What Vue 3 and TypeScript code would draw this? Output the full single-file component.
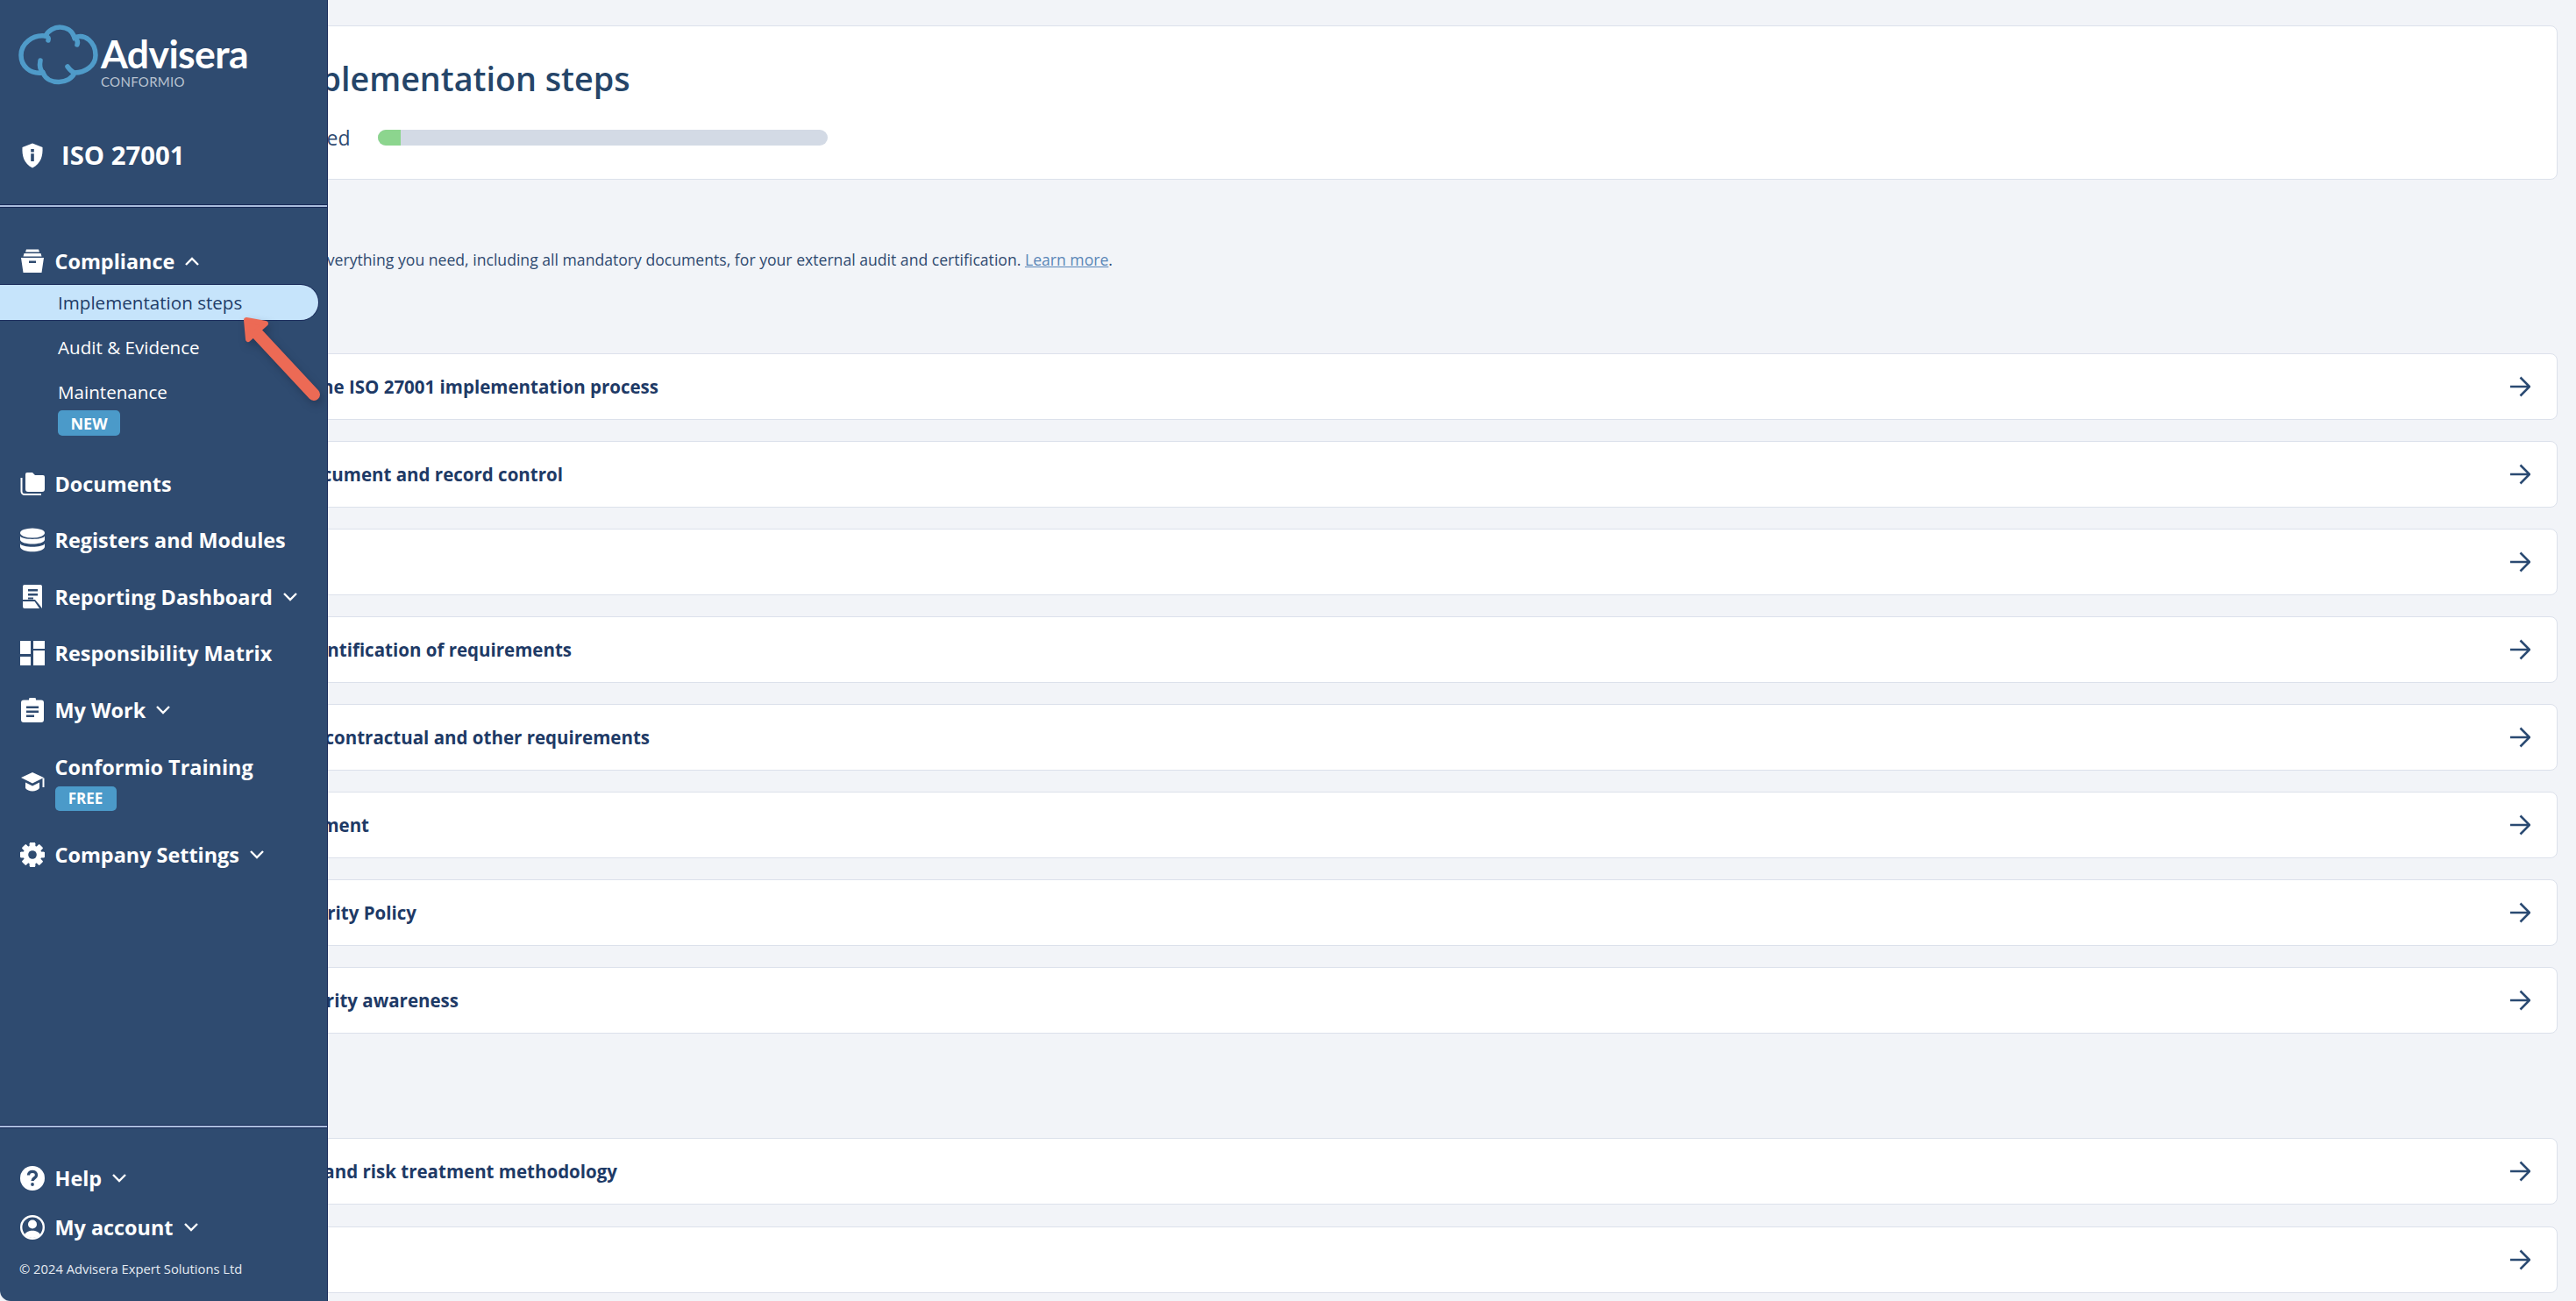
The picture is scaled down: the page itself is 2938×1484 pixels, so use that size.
<script setup lang="ts">
interface Row { text: string; end: number }
const groupA: Row[] = [
  { text: 'Read the ISO 27001 implementation process', end: 750 },
  { text: 'Document and record control', end: 641 },
  { text: 'Plan', end: 372 },
  { text: 'Identification of requirements', end: 651 },
  { text: 'Legal, contractual and other requirements', end: 740 },
  { text: 'Management', end: 420 },
  { text: 'Information Security Policy', end: 474 },
  { text: 'Training and security awareness', end: 522 },
]
const groupB: Row[] = [
  { text: 'Risk assessment and risk treatment methodology', end: 703 },
  { text: 'Register', end: 372 },
]
const START = 300
const labelStyle = (r: Row) => ({ width: `${r.end - START}px` })
const teeth = [0, 45, 90, 135, 180, 225, 270, 315]
</script>

<template>
  <div class="page">
    <main class="main">
      <section class="head-card">
        <h1 class="title"><span>Implementation steps</span></h1>
        <div class="progress-line">
          <span class="progress-label"><span>Completed</span></span>
          <div class="track"><div class="fill"></div></div>
        </div>
      </section>
      <p class="intro">
        <span class="intro-in">Here you have everything you need, including all mandatory documents, for your external audit and certification. <a class="link">Learn more</a>.</span>
      </p>
      <div class="group">
        <div v-for="r in groupA" :key="r.text" class="row">
          <span class="row-label" :style="labelStyle(r)"><span>{{ r.text }}</span></span>
          <svg class="arrow" viewBox="0 0 24 24"><path d="M1 12H22.500M12.500 1.500L23 12L12.500 22.500" /></svg>
        </div>
      </div>
      <div class="group group-b">
        <div v-for="r in groupB" :key="r.text" class="row">
          <span class="row-label" :style="labelStyle(r)"><span>{{ r.text }}</span></span>
          <svg class="arrow" viewBox="0 0 24 24"><path d="M1 12H22.500M12.500 1.500L23 12L12.500 22.500" /></svg>
        </div>
      </div>
    </main>

    <aside class="side">
      <div class="side-top">
        <div class="brand">
          <svg class="cloud" viewBox="0 0 90 68">
            <path d="M30 13 C36 0 58 -1 63 15 C75 10 87 20 87 35 C87 47 75 55 63 55 C58 68 33 70 27 55 C12 57 2 47 2 35 C2 22 15 11 30 13" />
            <path d="M30 13 C33 14 34 16 33 18" />
            <path d="M63 15 C66 17 67 20 66 23" />
            <path d="M55 48 C58 52 60 54 63 55" />
            <path d="M27 55 C23 51 23 46 24 41" />
          </svg>
          <div class="brand-text">
            <div class="brand-name">Advisera</div>
            <div class="brand-sub">CONFORMIO</div>
          </div>
        </div>
        <div class="product">
          <svg class="icon shield" viewBox="0 0 24 28"><path fill-rule="evenodd" d="M12 0 L23.500 4.500 C24 14 22 23 12 28 C2 23 0 14 .5 4.500Z M10.200 6.500h3.600v3.600h-3.600Z M10.200 11.800h3.600v8.800h-3.600Z" /></svg>
          <span>ISO 27001</span>
        </div>
      </div>
      <div class="divider"></div>

      <nav class="nav">
        <div class="item first">
          <svg class="icon" viewBox="0 0 28 28"><path d="M7 0.500h14l1 3H6ZM4.500 5h19l1 3.500H3.500ZM1 10h26l-2.500 17H3.500ZM10 13.500v2.500h8v-2.500Z" fill-rule="evenodd" /></svg>
          <span>Compliance</span>
          <svg class="chev up" viewBox="0 0 16 10"><path d="M1 9L8 2L15 9" /></svg>
        </div>
        <div class="sub active">Implementation steps</div>
        <div class="sub">Audit &amp; Evidence</div>
        <div class="sub sub-m">
          <span>Maintenance</span>
          <span class="badge">NEW</span>
        </div>
        <div class="item">
          <svg class="icon" viewBox="0 0 28 28"><path d="M6 3a2 2 0 0 1 2-2h6l3 3h9a2 2 0 0 1 2 2v14a3 3 0 0 1-3 3H9a3 3 0 0 1-3-3Z" /><path class="thin" d="M1.500 7v15.500a3.500 3.500 0 0 0 3.500 3.500h19" /></svg>
          <span>Documents</span>
        </div>
        <div class="item">
          <svg class="icon" viewBox="0 0 28 28"><ellipse cx="14" cy="6" rx="14" ry="5.500" /><path d="M0 9.500C2 14 26 14 28 9.500V14C26 20 2 20 0 14ZM0 18C2 23 26 23 28 18V22C26 29 2 29 0 22Z" /></svg>
          <span>Registers and Modules</span>
        </div>
        <div class="item">
          <svg class="icon" viewBox="0 0 28 28"><path fill-rule="evenodd" d="M5 0H23a2 2 0 0 1 2 2V27L22 23 17 17H3V2a2 2 0 0 1 2-2ZM9 5v2.500h11V5ZM9 10v2.500h11V10ZM9 14.500v2h6v-2Z" /><path d="M3 19H16.500L22 27H5a2 2 0 0 1-2-2Z" /></svg>
          <span>Reporting Dashboard</span>
          <svg class="chev" viewBox="0 0 16 10"><path d="M1 1L8 8L15 1" /></svg>
        </div>
        <div class="item">
          <svg class="icon" viewBox="0 0 28 28"><path d="M0 0h12v15H0ZM15 0h13v9H15ZM15 11h13v17H15ZM0 18h12v10H0Z" /></svg>
          <span>Responsibility Matrix</span>
        </div>
        <div class="item">
          <svg class="icon" viewBox="0 0 28 28"><path fill-rule="evenodd" d="M10 2.500a4 4 0 0 1 8 0h6a3 3 0 0 1 3 3V25a3 3 0 0 1-3 3H4a3 3 0 0 1-3-3V5.500a3 3 0 0 1 3-3ZM7 9.500V12H21V9.500ZM7 14.500V17H21V14.500ZM7 19.500V22H16V19.500Z" /></svg>
          <span>My Work</span>
          <svg class="chev" viewBox="0 0 16 10"><path d="M1 1L8 8L15 1" /></svg>
        </div>
        <div class="item tall">
          <svg class="icon" viewBox="0 0 28 28"><path d="M14 3L27 9L14 15.500L1 9Z" /><path d="M6 14.500L14 18.500L22 14.500V21C19 25.500 9 25.500 6 21Z" /><path class="thin" d="M26.500 9.500V20" /></svg>
          <div class="tall-col">
            <span>Conformio Training</span>
            <span class="badge free">FREE</span>
          </div>
        </div>
        <div class="item settings">
          <svg class="icon" viewBox="0 0 28 28">
            <rect v-for="a in teeth" :key="a" x="10.800" y="0" width="6.400" height="28" rx="1.200" :transform="`rotate(${a} 14 14)`" />
            <circle cx="14" cy="14" r="10.500" />
            <circle class="hole" cx="14" cy="14" r="4.800" />
          </svg>
          <span>Company Settings</span>
          <svg class="chev" viewBox="0 0 16 10"><path d="M1 1L8 8L15 1" /></svg>
        </div>
      </nav>

      <div class="divider"></div>
      <div class="foot">
        <div class="item foot-item">
          <svg class="icon" viewBox="0 0 28 28"><circle cx="14" cy="14" r="14" /><path class="cut" d="M9.500 10.500C9.500 5 18.500 5 18.500 10.500C18.500 14 14 13.500 14 17" /><circle class="hole" cx="14" cy="21" r="1.900" /></svg>
          <span>Help</span>
          <svg class="chev" viewBox="0 0 16 10"><path d="M1 1L8 8L15 1" /></svg>
        </div>
        <div class="item foot-item">
          <svg class="icon" viewBox="0 0 28 28"><circle class="ring" cx="14" cy="14" r="12.800" /><circle cx="14" cy="10.500" r="5" /><path d="M5 22.500C7 16 21 16 23 22.500C19 27 9 27 5 22.500Z" /></svg>
          <span>My account</span>
          <svg class="chev" viewBox="0 0 16 10"><path d="M1 1L8 8L15 1" /></svg>
        </div>
        <div class="copy">© 2024 Advisera Expert Solutions Ltd</div>
      </div>
    </aside>

    <svg class="pointer" viewBox="0 0 120 120">
      <path class="pointer-line" d="M88 93L20 20" />
      <path class="pointer-head" d="M11 8L33 12L13 30Z" />
    </svg>
  </div>
</template>

<style>
html, body { margin: 0; background: #f2f4f8; }
</style>

<style scoped>
.page {
  position: relative;
  width: 2938px;
  height: 1484px;
  overflow: hidden;
  background: #f2f4f8;
  font-family: "Open Sans", "Noto Sans", sans-serif;
  color: #1e3a66;
}
.main {
  box-sizing: border-box;
  height: 100%;
  padding: 29px 21px 0 280px;
}
.head-card {
  box-sizing: border-box;
  height: 176px;
  background: #fff;
  border: 1.500px solid #dce1eb;
  border-radius: 8px;
  padding: 0 0 0 40px;
}
.title {
  margin: 35px 0 0;
  width: 397.500px;
  height: 50px;
  display: flex;
  justify-content: flex-end;
  white-space: nowrap;
  font-size: 37.700px;
  line-height: 50px;
  font-weight: 600;
  color: #254569;
}
.title span, .progress-label span { flex-shrink: 0; }
.progress-line {
  display: flex;
  align-items: center;
  margin-top: 30.500px;
  height: 22px;
}
.progress-label {
  width: 78.500px;
  font-size: 23px;
  line-height: 22px;
  white-space: nowrap;
  display: flex;
  justify-content: flex-end;
  color: #2f4a70;
}
.track {
  width: 513px;
  height: 18px;
  margin-left: 31.500px;
  background: #d3dae5;
  border-radius: 9px;
  overflow: hidden;
}
.fill { width: 25.500px; height: 100%; background: #8cd58e; }
.intro {
  margin: 0;
  height: 197.500px;
  box-sizing: border-box;
  padding-top: 79px;
  font-size: 17.620px;
  line-height: 24px;
  color: #2f4a70;
  white-space: nowrap;
  width: 989px;
  display: flex;
  justify-content: flex-end;
}
.intro-in { flex-shrink: 0; }
.link { color: #5a86b7; text-decoration: underline; }
.group { display: flex; flex-direction: column; gap: 24.140px; }
.group-b { margin-top: 119px; }
.row {
  box-sizing: border-box;
  height: 76px;
  background: #fff;
  border: 1.500px solid #dce1eb;
  border-radius: 8px;
  display: flex;
  align-items: center;
  justify-content: space-between;
  padding: 0 30px 0 20px;
}
.row-label {
  display: flex;
  justify-content: flex-end;
  white-space: nowrap;
  font-size: 20.500px;
  font-weight: 700;
  color: #1e3a66;
}
.row-label span { flex-shrink: 0; }
.arrow { width: 24px; height: 24px; fill: none; stroke: #2a4a72; stroke-width: 2.600; }

.side {
  position: absolute;
  left: 0;
  top: 0;
  bottom: 0;
  width: 374px;
  box-sizing: border-box;
  background: #2f4b70;
  border-right: 1.500px solid #1d2f5c;
  border-bottom-left-radius: 12px;
  display: flex;
  flex-direction: column;
  color: #fff;
}
.side-top { height: 234px; box-sizing: border-box; padding: 28px 0 0 22px; }
.brand { display: flex; align-items: flex-start; gap: 3px; }
.cloud { width: 90px; height: 68px; flex-shrink: 0; fill: none; stroke: #4f9bc9; stroke-width: 5.500; stroke-linecap: round; overflow: visible; }
.brand-text { padding-top: 10px; }
.brand-name { font-family: "Lato", "Open Sans", sans-serif; font-size: 44.500px; line-height: 46px; font-weight: 700; letter-spacing: -.6px; color: #fff; }
.brand-sub { font-family: "Lato", "Open Sans", sans-serif; margin-top: 1px; font-size: 15px; line-height: 16px; color: #b9c3d0; letter-spacing: .3px; }
.product {
  display: flex;
  align-items: center;
  gap: 21px;
  margin: 60px 0 0 3px;
  font-size: 29.300px;
  line-height: 32px;
  font-weight: 700;
}
.shield { width: 24px; height: 29px; }
.icon { flex-shrink: 0; fill: #fff; }
.divider {
  height: 2px;
  background: #aabddd;
  box-shadow: 0 -1px 0 #182a58, 0 1px 0 #182a58;
}
.nav { flex: 1; padding-top: 29.500px; }
.item {
  display: flex;
  align-items: center;
  height: 64.500px;
  padding-left: 23px;
  font-size: 23.400px;
  font-weight: 700;
  white-space: nowrap;
}
.item .icon { width: 28px; height: 28px; margin-right: 11.500px; }
.first { height: 65px; }
.chev { width: 16px; height: 10px; margin-left: 12px; fill: none; stroke: #fff; stroke-width: 2.400; }
.sub {
  display: flex;
  align-items: center;
  height: 40px;
  margin-bottom: 11px;
  padding-left: 66px;
  font-size: 20.600px;
  color: #fff;
  white-space: nowrap;
}
.first + .sub { margin-top: -5.500px; }
.active {
  width: 363px;
  box-sizing: border-box;
  background: #c6e4fb;
  color: #1f3c68;
  border-radius: 0 20px 20px 0;
  box-shadow: 0 0 0 1px #1b2d5c;
}
.sub-m {
  height: 86px;
  margin: 17.500px 0 0;
  flex-direction: column;
  align-items: flex-start;
  justify-content: flex-start;
  gap: 7.500px;
  line-height: 27px;
}
.badge {
  display: flex;
  align-items: center;
  justify-content: center;
  width: 71px;
  height: 29px;
  background: #4b9ac9;
  border-radius: 5px;
  font-size: 18px;
  font-weight: 700;
  line-height: 1;
  color: #fff;
}
.tall { height: 90px; margin-top: 5px; }
.tall-col { display: flex; flex-direction: column; gap: 7px; line-height: 30px; }
.free { width: 70px; height: 28px; font-size: 17px; }
.settings { margin-top: 5.250px; }
.thin { fill: none; stroke: #fff; stroke-width: 2; }
.hole { fill: #2f4b70; }
.cut { fill: none; stroke: #2f4b70; stroke-width: 3.400; }
.ring { fill: none; stroke: #fff; stroke-width: 2.400; }
.foot { height: 198px; box-sizing: border-box; padding-top: 30px; }
.foot-item { height: 56px; }
.copy { margin: 8px 0 0 22px; font-size: 14.760px; line-height: 22px; white-space: nowrap; color: #e6ebf2; }

.pointer {
  position: absolute;
  left: 270px;
  top: 357px;
  width: 120px;
  height: 120px;
  overflow: visible;
  filter: drop-shadow(3px 5px 5px rgba(20, 30, 50, .35));
}
.pointer-line { fill: none; stroke: #ec6a55; stroke-width: 14; stroke-linecap: round; }
.pointer-head { fill: #ec6a55; stroke: #ec6a55; stroke-width: 6; stroke-linejoin: round; }
</style>
